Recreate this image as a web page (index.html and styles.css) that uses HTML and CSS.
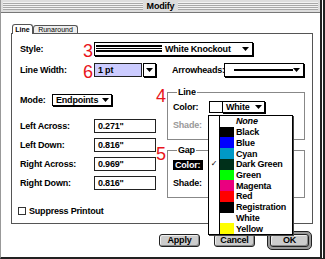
FILE: index.html
```html
<!DOCTYPE html>
<html lang="en">
<head>
    <meta charset="UTF-8">
    <title>Modify</title>
    <link rel="stylesheet" href="styles.css">
</head>
<body>
    <div class="window">
        <div class="titlebar">
            <div class="stripes"></div>
            <div class="title">Modify</div>
            <div class="stripes"></div>
        </div>

        <div class="tabs">
            <div class="tab active">Line</div>
            <div class="tab">Runaround</div>
        </div>

        <div class="panel">
            <div class="row">
                <span class="label">Style:</span>
                <span class="num">3</span>
                <div class="popup style-popup">
                    <svg class="lines" width="66" height="12">
                        <rect x="0" y="2" width="66" height="2" fill="#000"/>
                        <rect x="0" y="5" width="66" height="1" fill="#000"/>
                        <rect x="0" y="7" width="66" height="2" fill="#000"/>
                    </svg>
                    <span class="popup-text">White Knockout</span>
                    <svg class="arrow" width="7" height="4"><polygon points="0,0 7,0 3.5,4" fill="#000"/></svg>
                </div>
            </div>

            <div class="row row-width">
                <span class="label">Line Width:</span>
                <span class="num">6</span>
                <div class="field width-field">1 pt</div>
                <div class="arrow-btn">
                    <svg width="7" height="4"><polygon points="0,0 7,0 3.5,4" fill="#000"/></svg>
                </div>
                <span class="label arrow-label">Arrowheads:</span>
                <div class="popup arrow-popup">
                    <span class="thick-line"></span>
                    <svg class="arrow" width="7" height="4"><polygon points="0,0 7,0 3.5,4" fill="#000"/></svg>
                </div>
            </div>

            <div class="lower">
                <div class="left-col">
                    <div class="mode-row">
                        <span class="label mode-label">Mode:</span>
                        <div class="popup mode-popup">
                            <span class="popup-text">Endpoints</span>
                            <svg class="arrow" width="7" height="4"><polygon points="0,0 7,0 3.5,4" fill="#000"/></svg>
                        </div>
                    </div>

                    <div class="coords">
                        <div class="coord-row"><span class="label">Left Across:</span><div class="field">0.271"</div></div>
                        <div class="coord-row"><span class="label">Left Down:</span><div class="field">0.816"</div></div>
                        <div class="coord-row"><span class="label">Right Across:</span><div class="field">0.969"</div></div>
                        <div class="coord-row"><span class="label">Right Down:</span><div class="field">0.816"</div></div>
                    </div>

                    <div class="check-row">
                        <span class="checkbox"></span>
                        <span>Suppress Printout</span>
                    </div>
                </div>

                <div class="right-col">
                    <div class="group-row">
                        <span class="num">4</span>
                        <fieldset class="group">
                            <legend>Line</legend>
                            <div class="color-row">
                                <span class="label">Color:</span>
                                <span class="swatch"></span>
                                <div class="popup color-popup">
                                    <span class="popup-text">White</span>
                                    <svg class="arrow" width="7" height="4"><polygon points="0,0 7,0 3.5,4" fill="#000"/></svg>
                                </div>
                            </div>
                            <div class="shade-row disabled"><span class="label">Shade:</span></div>
                        </fieldset>
                    </div>

                    <div class="group-row gap-row">
                        <span class="num">5</span>
                        <fieldset class="group">
                            <legend>Gap</legend>
                            <div class="color-row">
                                <span class="label"><span class="hilite">Color:</span></span>
                                <span class="swatch"></span>
                                <div class="popup color-popup"></div>
                            </div>
                            <div class="shade-row"><span class="label">Shade:</span></div>
                        </fieldset>
                    </div>
                </div>
            </div>
        </div>

        <div class="buttons">
            <button class="btn apply">Apply</button>
            <button class="btn cancel">Cancel</button>
            <span class="default-ring"><button class="btn ok">OK</button></span>
        </div>

        <ul class="menu">
            <li><span class="mark"></span><span class="chip"></span><i>None</i></li>
            <li><span class="mark"></span><span class="chip" style="background:#000"></span>Black</li>
            <li><span class="mark"></span><span class="chip" style="background:#0000ff"></span>Blue</li>
            <li><span class="mark"></span><span class="chip" style="background:#0099c6"></span>Cyan</li>
            <li><span class="mark">✓</span><span class="chip" style="background:#00301a"></span>Dark Green</li>
            <li><span class="mark"></span><span class="chip" style="background:#00ff00"></span>Green</li>
            <li><span class="mark"></span><span class="chip" style="background:#ea007f"></span>Magenta</li>
            <li><span class="mark"></span><span class="chip" style="background:#ff0000"></span>Red</li>
            <li><span class="mark"></span><span class="chip" style="background:#000"></span>Registration</li>
            <li><span class="mark"></span><span class="chip"></span>White</li>
            <li><span class="mark"></span><span class="chip" style="background:#ffff00"></span>Yellow</li>
        </ul>
    </div>
</body>
</html>
```

FILE: styles.css
```css
body {
    margin: 0;
    padding: 0;
    font-family: "Liberation Sans", Arial, sans-serif;
    font-size: 9px;
    font-weight: bold;
    letter-spacing: -0.2px;
    color: #000;
    background-color: #fff;
}

.window {
    position: relative;
    width: 325px;
    height: 259px;
    box-sizing: border-box;
    border-left: 1px solid #999;
    border-right: 5px double #222;
    border-bottom: 2px solid #222;
    background-color: #fff;
}

.titlebar {
    display: flex;
    align-items: center;
    height: 12px;
    padding: 0 2px;
    background-color: #ddd;
    border-bottom: 1px solid #777;
}

.stripes {
    flex: 1;
    height: 8px;
    background: repeating-linear-gradient(#f2f2f2 0 1px, #a8a8a8 1px 2px);
}

.title {
    padding: 0 4px;
    line-height: 12px;
}

.tabs {
    position: relative;
    z-index: 1;
    display: flex;
    align-items: flex-end;
    height: 9px;
    margin-top: 11px;
    padding-left: 11px;
}

.tab {
    height: 7px;
    line-height: 7px;
    width: 43px;
    text-align: center;
    font-size: 7px;
    font-weight: normal;
    letter-spacing: 0;
    border: 1px solid #555;
    border-bottom: none;
    border-radius: 3px 3px 0 0;
    background-color: #eee;
}

.tab.active {
    width: 19px;
    height: 9px;
    line-height: 9px;
    font-weight: bold;
    margin-bottom: -1px;
    background-color: #fff;
}

.panel {
    margin-left: 10px;
    width: 302px;
    height: 191px;
    box-sizing: border-box;
    border: 1px solid #555;
    padding: 8px 0 0 8px;
}

.row {
    display: flex;
    align-items: center;
    height: 14px;
}

.row-width {
    margin-top: 7px;
}

.label {
    flex: none;
    width: 63px;
    white-space: nowrap;
}

.num {
    flex: none;
    width: 11px;
    font-size: 18px;
    line-height: 18px;
    font-weight: normal;
    letter-spacing: 0;
    color: #e8141c;
}

.row .num {
    padding-top: 3px;
}

.popup {
    display: flex;
    align-items: center;
    box-sizing: border-box;
    border: 1px solid #000;
    box-shadow: 1px 1px 0 #000;
    background-color: #fff;
    white-space: nowrap;
}

.popup .arrow {
    margin-left: auto;
    margin-right: 3px;
}

.style-popup {
    width: 159px;
    height: 14px;
}

.style-popup .lines {
    margin-left: 1px;
}

.style-popup .popup-text {
    margin-left: 3px;
}

.field {
    box-sizing: border-box;
    width: 62px;
    height: 14px;
    line-height: 12px;
    padding-left: 3px;
    border: 1px solid #222;
    background-color: #fff;
}

.width-field {
    width: 48px;
    background-color: #ccccff;
}

.arrow-btn {
    display: flex;
    align-items: center;
    justify-content: center;
    box-sizing: border-box;
    width: 13px;
    height: 14px;
    margin-left: 1px;
    border: 1px solid #000;
    box-shadow: 1px 1px 0 #000;
}

.arrow-label {
    width: 52px;
    margin-left: 16px;
}

.arrow-popup {
    width: 80px;
    height: 14px;
}

.thick-line {
    width: 60px;
    height: 2px;
    margin-left: 9px;
    background-color: #000;
}

.lower {
    display: flex;
    margin-top: 10px;
}

.left-col {
    width: 136px;
    flex: none;
}

.mode-row {
    display: flex;
    align-items: center;
    height: 12px;
    margin-top: 7px;
}

.mode-label {
    width: 32px;
}

.mode-popup {
    width: 60px;
    height: 12px;
    padding-left: 3px;
}

.mode-popup .arrow {
    margin-right: 2px;
}

.coords {
    display: flex;
    flex-direction: column;
    gap: 5px;
    margin-top: 13px;
}

.coord-row {
    display: flex;
    align-items: center;
    height: 14px;
}

.coord-row .label {
    width: 74px;
}

.check-row {
    display: flex;
    align-items: center;
    height: 8px;
    margin-top: 17px;
    margin-left: -2px;
}

.checkbox {
    width: 8px;
    height: 8px;
    box-sizing: border-box;
    margin-right: 3px;
    border: 1px solid #333;
    background-color: #fff;
}

.right-col {
    flex: 1;
}

.group-row {
    display: flex;
    align-items: flex-start;
}

.gap-row {
    margin-top: 5px;
}

.group {
    width: 138px;
    box-sizing: border-box;
    margin: 0;
    padding: 3px 5px 8px;
    min-width: 0;
    border: 1px solid #888;
}

.group legend {
    padding: 0 1px;
    margin-left: 4px;
    line-height: 11px;
}

.color-row {
    display: flex;
    align-items: center;
    height: 12px;
}

.color-row .label {
    width: 36px;
}

.hilite {
    display: inline-block;
    padding: 0 3px 0 2px;
    line-height: 10px;
    color: #fff;
    background-color: #000;
}

.swatch {
    width: 14px;
    height: 12px;
    box-sizing: border-box;
    border: 1px solid #000;
    background-color: #fff;
}

.color-popup {
    width: 43px;
    height: 12px;
    margin-left: -1px;
    padding-left: 3px;
}

.color-popup .arrow {
    margin-right: 2px;
}

.shade-row {
    display: flex;
    align-items: center;
    height: 12px;
    margin-top: 6px;
}

.shade-row.disabled {
    color: #999;
}

.buttons {
    display: flex;
    justify-content: flex-end;
    align-items: center;
    height: 19px;
    margin-top: 7px;
    padding-right: 8px;
}

.btn {
    width: 41px;
    height: 13px;
    box-sizing: border-box;
    padding: 0;
    font: inherit;
    letter-spacing: inherit;
    line-height: 11px;
    color: #000;
    border: 1px solid #222;
    border-radius: 3px;
    background-color: #ccc;
    box-shadow: inset 1px 1px 0 #eee, inset -1px -1px 0 #888;
}

.apply {
    margin-right: 14px;
}

.cancel {
    margin-right: 12px;
}

.default-ring {
    display: flex;
    padding: 2px;
    border: 1px solid #222;
    border-radius: 5px;
    background-color: #999;
}

.ok {
    width: 39px;
}

.menu {
    position: absolute;
    left: 207px;
    top: 115px;
    z-index: 2;
    display: grid;
    grid-template-rows: repeat(11, 1fr);
    width: 85px;
    height: 120px;
    box-sizing: border-box;
    margin: 0;
    padding: 0;
    list-style: none;
    border: 1px solid #000;
    background-color: #fff;
    box-shadow: 1px 1px 0 #444;
}

.menu li {
    display: flex;
    align-items: center;
    line-height: 10px;
    white-space: nowrap;
}

.mark {
    width: 10px;
    text-align: center;
    font-family: "DejaVu Sans", sans-serif;
    font-size: 8px;
    font-weight: normal;
}

.chip {
    align-self: stretch;
    width: 15px;
    margin-right: 2px;
    box-sizing: border-box;
    border-left: 1px solid #000;
}
```
